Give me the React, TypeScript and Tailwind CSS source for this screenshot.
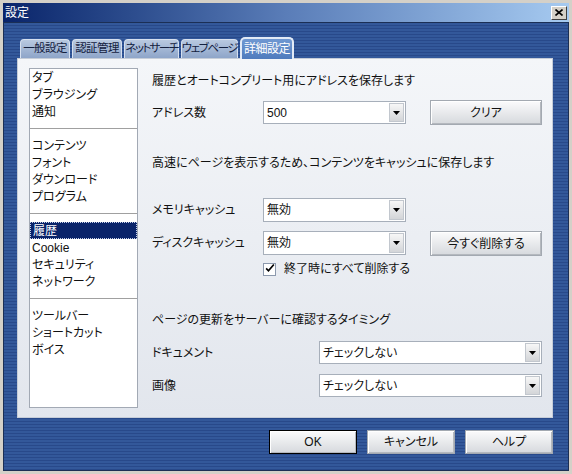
import React from 'react'

const tabs = [
  { label: '一般設定', w: 'w-[50px]', t: 'tracking-[-0.6px]' },
  { label: '認証管理', w: 'w-[50px]', t: 'tracking-[-0.6px]' },
  { label: 'ネットサーチ', w: 'w-[55px]', t: 'tracking-[-1.6px]' },
  { label: 'ウェブページ', w: 'w-[57px]', t: 'tracking-[-1.4px]' },
  { label: '詳細設定', w: 'w-[54px]', t: 'tracking-[-0.5px]', active: true },
]

const groups: { label: string; selected?: boolean }[][] = [
  [{ label: 'タブ' }, { label: 'ブラウジング' }, { label: '通知' }],
  [{ label: 'コンテンツ' }, { label: 'フォント' }, { label: 'ダウンロード' }, { label: 'プログラム' }],
  [{ label: '履歴', selected: true }, { label: 'Cookie' }, { label: 'セキュリティ' }, { label: 'ネットワーク' }],
  [{ label: 'ツールバー' }, { label: 'ショートカット' }, { label: 'ボイス' }],
]

function Dropdown({ value, className, h = 'h-[23px]' }: { value: string; className: string; h?: string }) {
  return (
    <div className={`flex ${h} items-stretch border border-[#a7afba] bg-white ${className}`}>
      <span className="flex flex-1 items-center pl-[3px] text-[12px] text-[#111]">{value}</span>
      <span className="m-[1px] flex w-[15px] items-center justify-center border border-[#c2c7ce] bg-gradient-to-b from-[#f7f7f7] to-[#d3d5d8]">
        <svg width="7" height="4" viewBox="0 0 7 4">
          <path d="M0 0h7L3.5 4z" fill="#000" />
        </svg>
      </span>
    </div>
  )
}

function Button({ children, className }: { children: React.ReactNode; className: string }) {
  return (
    <button
      className={`flex items-center justify-center border border-[#a3a9b1] bg-gradient-to-b from-[#fbfbfc] to-[#d6d9dd] text-[12px] text-[#111] shadow-[inset_1px_1px_0_#ffffff,inset_-1px_-1px_0_#b4b8be] ${className}`}
    >
      {children}
    </button>
  )
}

export default function App() {
  return (
    <div
      className="flex h-[474px] w-[572px] flex-col border-[3px] border-[#d4d0c8] bg-[#d4d0c8] font-['Liberation_Sans','Noto_Sans_CJK_JP',sans-serif] [font-feature-settings:'palt'] shadow-[inset_-1px_-1px_0_#404040]"
    >
      {/* title bar */}
      <div className="flex h-[19px] items-center justify-between bg-gradient-to-r from-[#0a246a] via-[#5a7db8] to-[#a6caf0] pl-[2px] pr-[2px]">
        <span className="text-[12px] text-white">設定</span>
        <span className="flex h-[14px] w-[16px] items-center justify-center border border-t-white border-l-white border-r-[#404040] border-b-[#404040] bg-[#d4d0c8]">
          <svg width="8" height="7" viewBox="0 0 8 7">
            <path d="M0.5 0.5l7 6M7.5 0.5l-7 6" stroke="#000" strokeWidth="1.6" />
          </svg>
        </span>
      </div>

      {/* body */}
      <div className="flex flex-1 flex-col border border-[#1b2f55] bg-[repeating-linear-gradient(180deg,#33589a_0px,#33589a_2px,#28498a_2px,#28498a_3px)] pl-[13px]">
        {/* tabs */}
        <div className="mt-[14px] flex h-[21px] items-end gap-[2px] pl-[3px]">
          {tabs.map(t =>
            t.active ? (
              <div
                key={t.label}
                className={`${t.w} ${t.t} relative z-10 -mb-[1px] flex h-[22px] items-center justify-center whitespace-nowrap rounded-t-[5px] border-2 border-b-0 border-[#e2eaf6] bg-gradient-to-b from-[#6f98d2] to-[#4f7bbd] text-[12px] text-white`}
              >
                {t.label}
              </div>
            ) : (
              <div
                key={t.label}
                className={`${t.w} ${t.t} flex h-[19px] items-center justify-center whitespace-nowrap rounded-t-[4px] border border-b-0 border-[#d6e0ef] bg-gradient-to-b from-[#b9c9e0] to-[#8ea5c9] text-[11.5px] text-[#14213f]`}
              >
                {t.label}
              </div>
            )
          )}
        </div>

        {/* panel */}
        <div className="flex h-[360px] w-[536px] border border-[#c6cdd8] bg-gradient-to-b from-[#f4f6f9] to-[#e2e6ed] pl-[11px] pt-[9px]">
          {/* category list */}
          <div className="flex h-[340px] w-[109px] flex-col border border-[#a2a9b4] bg-white">
            {groups.map((g, gi) => (
              <div key={gi}>
                {gi > 0 && <div className="my-[8px] h-px bg-[#a0a0a0]" />}
                {g.map(item => (
                  <div
                    key={item.label}
                    className={`flex h-[17px] items-center pl-[2px] text-[12px] ${
                      item.selected
                        ? 'border border-dotted border-[#c9d3ea] bg-[#0a246a] text-white'
                        : 'text-[#111]'
                    }`}
                  >
                    {item.label}
                  </div>
                ))}
              </div>
            ))}
          </div>

          {/* settings */}
          <div className="ml-[14px] flex w-[390px] flex-col text-[12px] text-[#111]">
            <div className="flex h-[26px] items-center">履歴とオートコンプリート用にアドレスを保存します</div>

            <div className="mt-[6px] flex h-[25px] items-center">
              <span className="w-[111px]">アドレス数</span>
              <Dropdown value="500" className="w-[143px]" />
              <Button className="ml-auto h-[25px] w-[112px]">クリア</Button>
            </div>

            <div className="mt-[25px] flex h-[26px] items-center">
              高速にページを表示するため、コンテンツをキャッシュに保存します
            </div>

            <div className="mt-[22px] flex h-[24px] items-center">
              <span className="w-[111px]">メモリキャッシュ</span>
              <Dropdown value="無効" className="w-[143px]" h="h-[24px]" />
            </div>

            <div className="mt-[9px] flex h-[25px] items-start">
              <span className="flex h-[24px] w-[111px] items-center">ディスクキャッシュ</span>
              <Dropdown value="無効" className="w-[143px]" h="h-[24px]" />
              <Button className="ml-auto h-[25px] w-[112px]">今すぐ削除する</Button>
            </div>

            <div className="mt-[5px] flex h-[16px] items-center pl-[111px]">
              <span className="flex h-[13px] w-[13px] items-center justify-center border border-[#8c99ad] bg-white">
                <svg width="13" height="12" viewBox="0 0 13 12" className="-mt-[2px] ml-[1px]">
                  <path d="M1.5 6.5l3 3.2L11.5 1.5" fill="none" stroke="#000" strokeWidth="2.2" />
                </svg>
              </span>
              <span className="ml-[8px]">終了時にすべて削除する</span>
            </div>

            <div className="mt-[30px] flex h-[26px] items-center">ページの更新をサーバーに確認するタイミング</div>

            <div className="mt-[8px] flex h-[23px] items-center">
              <span className="w-[167px]">ドキュメント</span>
              <Dropdown value="チェックしない" className="w-[223px]" />
            </div>

            <div className="mt-[10px] flex h-[23px] items-center">
              <span className="w-[167px]">画像</span>
              <Dropdown value="チェックしない" className="w-[223px]" />
            </div>
          </div>
        </div>

        {/* dialog buttons */}
        <div className="mt-[12px] flex w-[536px] justify-end gap-[10px]">
          <Button className="h-[24px] w-[88px] !border-black">OK</Button>
          <Button className="h-[24px] w-[88px]">キャンセル</Button>
          <Button className="h-[24px] w-[88px]">ヘルプ</Button>
        </div>
      </div>
    </div>
  )
}
